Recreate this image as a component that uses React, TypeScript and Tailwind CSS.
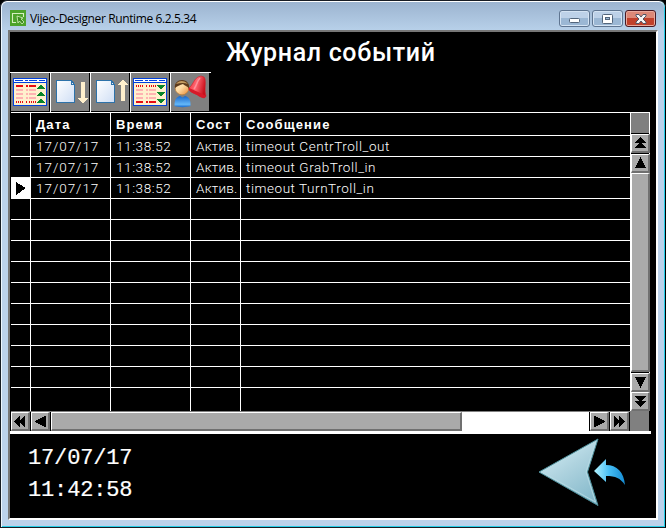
import React from 'react';

const rows = [
  ['17/07/17', '11:38:52', 'Актив.', 'timeout CentrTroll_out'],
  ['17/07/17', '11:38:52', 'Актив.', 'timeout GrabTroll_in'],
  ['17/07/17', '11:38:52', 'Актив.', 'timeout TurnTroll_in'],
  ...Array.from({ length: 10 }, () => ['', '', '', '']),
];

function ToolButton({ children }: { children: React.ReactNode }) {
  return (
    <button className="flex h-10 w-10 border-t border-r border-white bg-black pr-px last:border-r-0">
      <svg width="38" height="38" viewBox="0 0 38 38" className="bg-[#808080]" shapeRendering="crispEdges">
        {children}
      </svg>
    </button>
  );
}

function ListIcon({ up }: { up: boolean }) {
  const ys = [12, 16, 20, 24, 28];
  return (
    <>
      <rect x="2" y="5" width="34" height="28" fill="#0040dc" />
      <rect x="3" y="6" width="32" height="26" fill="#fff0cd" />
      <rect x="3" y="6" width="32" height="3" fill="#fff" />
      <path d="M3 9.5H35M4 7.5H12M14 7.5H17M18 7.5H26M28 7.5H34" stroke="#0040dc" />
      {ys.map((y, i) => {
        const dotted = up ? i === 4 : i === 0;
        const solid = up ? i === 0 : i === 4;
        return (
          <path
            key={y}
            d={`M5 ${y + 1}H12M15 ${y + 1}H17M18 ${y + 1}H25`}
            stroke={dotted || solid ? '#e80b12' : '#ffb2b2'}
            strokeWidth="2"
            strokeDasharray={dotted ? '1 1' : undefined}
          />
        );
      })}
      {[12, 19, 26].map((y) => (
        <path
          key={y}
          d={up ? `M29 ${y}h2v1h1v1h1v1h1v1h-8v-1h1v-1h1v-1h1z` : `M26 ${y}h8v1h-1v1h-1v1h-1v1h-2v-1h-1v-1h-1v-1h-1z`}
          fill="#078529"
        />
      ))}
    </>
  );
}

function PageIcon({ up }: { up: boolean }) {
  return (
    <>
      <defs>
        <linearGradient id={up ? 'pageUp' : 'pageDown'} x1="0" y1="0" x2="1" y2="1">
          <stop stopColor="#fff" />
          <stop offset="1" stopColor="#cfdef5" />
        </linearGradient>
      </defs>
      <path d="M5.5 7.5H20.5L23.5 11.5V29.5H5.5Z" fill={up ? 'url(#pageUp)' : 'url(#pageDown)'} stroke="#2d72aa" />
      <path d="M20.5 8V11.5H24" fill="none" stroke="#2d72aa" />
      {up ? (
        <path d="M30 28V12H27V11L32 7L37 11V12H34V28Z" fill="#fff0cd" />
      ) : (
        <path d="M30 9H34V25H37V26L32 30L27 26V25H30Z" fill="#fff0cd" />
      )}
    </>
  );
}

function AlarmUserIcon() {
  return (
    <g shapeRendering="auto">
      <defs>
        <linearGradient id="face" x1="0" y1="0" x2="1" y2="1">
          <stop stopColor="#ffe5b8" />
          <stop offset=".45" stopColor="#ffdca6" />
          <stop offset="1" stopColor="#e88934" />
        </linearGradient>
        <linearGradient id="shirt" x1="0" y1="0" x2="0" y2="1">
          <stop stopColor="#1867cc" />
          <stop offset=".75" stopColor="#65b8f8" />
          <stop offset="1" stopColor="#1769cc" />
        </linearGradient>
        <linearGradient id="bell" x1="0" y1="0" x2="1" y2=".3">
          <stop stopColor="#f0303d" />
          <stop offset=".5" stopColor="#ff6872" />
          <stop offset="1" stopColor="#c9101c" />
        </linearGradient>
      </defs>
      <path d="M3.500 33C3.500 27 5 24 9 23L11.500 24.500L14 23C18.500 24 20 28 19.500 33C16 34.500 7 34.500 3.500 33Z" fill="url(#shirt)" />
      <circle cx="11" cy="15" r="6.8" fill="url(#face)" stroke="#c17a2b" strokeWidth=".6" />
      <path d="M4 15C3 10 7 7 11 7C16 7 19 11 18 16C17 13 14 13 12 11C9 12 6 13 4 15Z" fill="#5d3a1b" />
      <path d="M5 11C8 6.500 14 7.500 17 11C13 9.500 9 10 5 11Z" fill="#c39a5f" />
      <path d="M18 15C22 12 23 6 27 4L30 3L33 4L34 6C35 11 33 18 35 23C34 26 31 25 27 22C23 20 17 18 18 15Z" fill="url(#bell)" stroke="#d51c27" strokeWidth=".6" />
      <path d="M18 15C23 17 30 20 35 23C34 26 30 25 26 22C21 20 17 18 18 15Z" fill="#d71a29" />
      <path d="M29 5C26 8 26 12 23 16" fill="none" stroke="#ff929a" strokeWidth="1.5" />
    </g>
  );
}

const glyphs = {
  up: 'M9 3h1v2h1v2h1v2h1v2h1v2h1v1H4v-1h1v-2h1V9h1V7h1V5h1z',
  down: 'M4 4h11v1h-1v2h-1v2h-1v2h-1v2h-1v2H9v-2H8v-2H7V9H6V7H5V5H4z',
  left: 'M4 9h1V8h2V7h2V6h2V5h2V4h2v11h-2v-1h-2v-1H9v-1H7v-1H5v-1H4z',
  right: 'M4 4h2v1h2v1h2v1h2v1h2v1h1v1h-1v1h-2v1h-2v1H8v1H6v1H4z',
  up2: 'M9 3h1v1h1v1h1v1h1v1h1v1h1v1h-4v1h1v1h1v1h1v1h1v1H4v-1h1v-1h1v-1h1v-1h1V9H4V8h1V7h1V6h1V5h1V4h1z',
  down2: 'M4 4h11v1h-1v1h-1v1h-1v1h-1v1h4v1h-1v1h-1v1h-1v1h-1v1h-1v1H9v-1H8v-1H7v-1H6v-1H5v-1H4V9h4V8H7V7H6V6H5V5H4z',
  left2: 'M3 9h1V8h1V7h1V6h1V5h1V4h1v4h1V7h1V6h1V5h1V4h1v11h-1v-1h-1v-1h-1v-1h-1v-1H9v4H8v-1H7v-1H6v-1H5v-1H4v-1H3z',
  right2: 'M4 4h1v1h1v1h1v1h1v1h1V4h1v1h1v1h1v1h1v1h1v1h1v1h-1v1h-1v1h-1v1h-1v1h-1v1H9v-4H8v1H7v1H6v1H5v1H4z',
};

function ScrollButton({ glyph }: { glyph: keyof typeof glyphs }) {
  return (
    <button className="h-[19px] w-[19px] shrink-0 border-t border-l border-r-2 border-b-2 border-t-white border-l-white border-r-[#707070] border-b-[#707070] bg-[#aaa]">
      <svg width="16" height="16" viewBox="1 1 16 16" shapeRendering="crispEdges">
        <path d={glyphs[glyph]} />
      </svg>
    </button>
  );
}

function TitleBar() {
  const button = 'flex h-[17px] items-center justify-center rounded-[3px] border border-[#5f7591] shadow-[inset_0_0_0_1px_#d4e3f3]';
  return (
    <header className="flex h-[28px] shrink-0 items-start bg-linear-to-b from-[#9cb4d0] to-[#b7d0e9] pl-2 pr-[8px]">
      <svg width="16" height="16" viewBox="0 0 16 16" className="mt-2">
        <rect width="16" height="16" fill="#4da32a" />
        <path d="M6 12.5H2.5V3.5H13.5V7" fill="none" stroke="#d6efbf" strokeWidth="1.1" />
        <path d="M7 6L13 8L11 9L14 12L12 14L9.5 11L8 13Z" fill="#3f8b20" stroke="#d6efbf" strokeWidth=".8" />
      </svg>
      <h1 className="ml-1 mt-[8px] whitespace-nowrap font-['Open_Sans','Noto_Sans',sans-serif] text-[12px] leading-[17px] tracking-[-0.38px] text-black">
        Vijeo-Designer Runtime 6.2.5.34
      </h1>
      <div className="ml-auto mt-2 flex gap-[2px]">
        <button className={button + ' w-[31px] bg-linear-to-b from-[#bdd1e8] from-50% to-[#9bb7d4] to-50%'}>
          <svg width="12" height="10"><rect x=".5" y="4.5" width="10" height="4" rx="1" fill="#fff" stroke="#53657b" /></svg>
        </button>
        <button className={button + ' w-[31px] bg-linear-to-b from-[#bdd1e8] from-50% to-[#9bb7d4] to-50%'}>
          <svg width="11" height="10"><rect x=".5" y=".5" width="10" height="9" rx="1" fill="#fff" stroke="#53657b" /><rect x="3.5" y="3.5" width="4" height="2" fill="#9bb7d4" stroke="#53657b" /></svg>
        </button>
        <button className="flex h-[17px] w-[31px] items-center justify-center rounded-[3px] border border-[#481923] bg-linear-to-b from-[#dc8877] from-50% to-[#c0402b] to-50% shadow-[inset_0_0_0_1px_#e9a99c]">
          <svg width="12" height="10"><path d="M1 .5H4L6 3L8 .5H11V2L8 5L11 8V9.500H8L6 7L4 9.500H1V8L4 5L1 2Z" fill="#f5f5f5" stroke="#535666" /></svg>
        </button>
      </div>
    </header>
  );
}

function EventTable() {
  const columns = 'grid grid-cols-[20px_80px_80px_50px_390px]';
  const cell = 'overflow-hidden whitespace-nowrap border-r border-white pl-[5px]';
  return (
    <section className="flex h-[322px] w-[641px] flex-col border-b-[3px] border-white bg-black">
      <div className="ml-px flex h-[299px] w-[639px] border-t border-r border-white">
        <div className="w-[620px] shrink-0">
          <div className={columns + ' h-[23px] border-b border-white text-[13px] font-bold leading-[23px] tracking-[1.1px]'}>
            <div className={cell} />
            <div className={cell}>Дата</div>
            <div className={cell}>Время</div>
            <div className={cell}>Сост</div>
            <div className={cell}>Сообщение</div>
          </div>
          {rows.map((row, i) => (
            <div key={i} className={columns + " h-[21px] border-b border-white font-['Roboto','Liberation_Sans',sans-serif] text-[13.5px] font-light leading-[20px] last:h-[23px] last:border-b-0"}>
              <div className={i === 2 ? 'border-r border-white bg-white' : 'border-r border-white'}>
                {i === 2 && (
                  <svg width="19" height="20" shapeRendering="crispEdges"><path d="M5 4L15 10L5 17Z" /></svg>
                )}
              </div>
              <div className={cell + ' tracking-[0.95px]'}>{row[0]}</div>
              <div className={cell + ' tracking-[0.6px]'}>{row[1]}</div>
              <div className={cell + ' tracking-[0.2px]'}>{row[2]}</div>
              <div className={cell + ' tracking-[0.55px]'}>{row[3]}</div>
            </div>
          ))}
        </div>
        <div className="flex w-[18px] flex-col">
          <div className="mb-px h-5 bg-[#808080]" />
          <ScrollButton glyph="up2" />
          <div className="h-px" />
          <ScrollButton glyph="up" />
          <div className="h-[200px] w-[19px] border-t border-l border-r-2 border-b-2 border-t-white border-l-white border-r-[#707070] border-b-[#707070] bg-[#aaa]" />
          <div className="h-px" />
          <ScrollButton glyph="down" />
          <ScrollButton glyph="down2" />
        </div>
      </div>
      <div className="ml-px flex h-5 w-[638px] gap-px border-t border-[#808080]">
        <ScrollButton glyph="left2" />
        <ScrollButton glyph="left" />
        <div className="h-[19px] w-[411px] shrink-0 border-t border-l border-r-2 border-b-2 border-t-white border-l-white border-r-[#707070] border-b-[#707070] bg-[#aaa]" />
        <div className="-ml-px w-[127px] shrink-0 bg-white" />
        <ScrollButton glyph="right" />
        <ScrollButton glyph="right2" />
        <div className="flex-1 bg-[#808080]" />
      </div>
    </section>
  );
}

function BackArrow() {
  return (
    <svg width="92" height="70" viewBox="0 0 92 70">
      <defs>
        <linearGradient id="arrow" x1=".2" y1="0" x2=".8" y2="1">
          <stop stopColor="#d4eef6" />
          <stop offset=".45" stopColor="#afd3df" />
          <stop offset="1" stopColor="#83b8ca" />
        </linearGradient>
        <linearGradient id="curl">
          <stop stopColor="#b5f4ff" />
          <stop offset=".5" stopColor="#45bdf4" />
          <stop offset="1" stopColor="#148bd3" />
        </linearGradient>
      </defs>
      <path d="M1 34L60 1L49.5 34L60 67.5Z" fill="url(#arrow)" stroke="#4e8f9b" />
      <path d="M4 34L57.500 4L48 34L57.500 64Z" fill="none" stroke="#b9dce5" strokeWidth=".8" />
      <path d="M56 33L68 21V27C79 27 86 34 87 47C82 40 78 38 68 38V44Z" fill="url(#curl)" />
    </svg>
  );
}

export default function App() {
  return (
    <main className="h-[528px] w-[666px] overflow-hidden bg-black">
      <div className="flex h-[528px] w-[666px] flex-col rounded-t-[7px] border border-[#171c24] border-r-black bg-[#bcd2eb] shadow-[inset_0_1px_0_#fff,inset_1px_0_0_#eef7ff,inset_-1px_0_0_#25cde7,inset_0_-1px_0_#25cde7]">
        <div className="mx-px mt-px overflow-hidden rounded-t-[6px] bg-[#b7d0e9]">
          <TitleBar />
        </div>
        <div className="ml-[7px] flex h-[490px] w-[650px] flex-col border-t-2 border-r-2 border-b-2 border-l-2 border-t-[#777] border-r-white border-b-white border-l-[#777] bg-black font-['Liberation_Sans',Arial,sans-serif] text-white">
          <h2 className="h-10 pl-[216px] pt-[3px] font-['Roboto','Liberation_Sans',sans-serif] text-[25px] font-medium leading-[36px] tracking-[0.65px]">Журнал событий</h2>
          <div className="flex h-10 w-[201px]">
            <div className="h-px w-px bg-white" />
            <ToolButton><ListIcon up /></ToolButton>
            <ToolButton><PageIcon up={false} /></ToolButton>
            <ToolButton><PageIcon up /></ToolButton>
            <ToolButton><ListIcon up={false} /></ToolButton>
            <ToolButton><AlarmUserIcon /></ToolButton>
          </div>
          <EventTable />
          <footer className="flex flex-1 items-start justify-between pl-[18px] pr-[26px]">
            <div className="pt-[9px] font-['Liberation_Mono',monospace] text-[22px] leading-8 tracking-[-0.15px] [-webkit-text-stroke:0.2px_white]">
              <div>17/07/17</div>
              <div>11:42:58</div>
            </div>
            <div className="pt-1"><BackArrow /></div>
          </footer>
        </div>
      </div>
    </main>
  );
}
